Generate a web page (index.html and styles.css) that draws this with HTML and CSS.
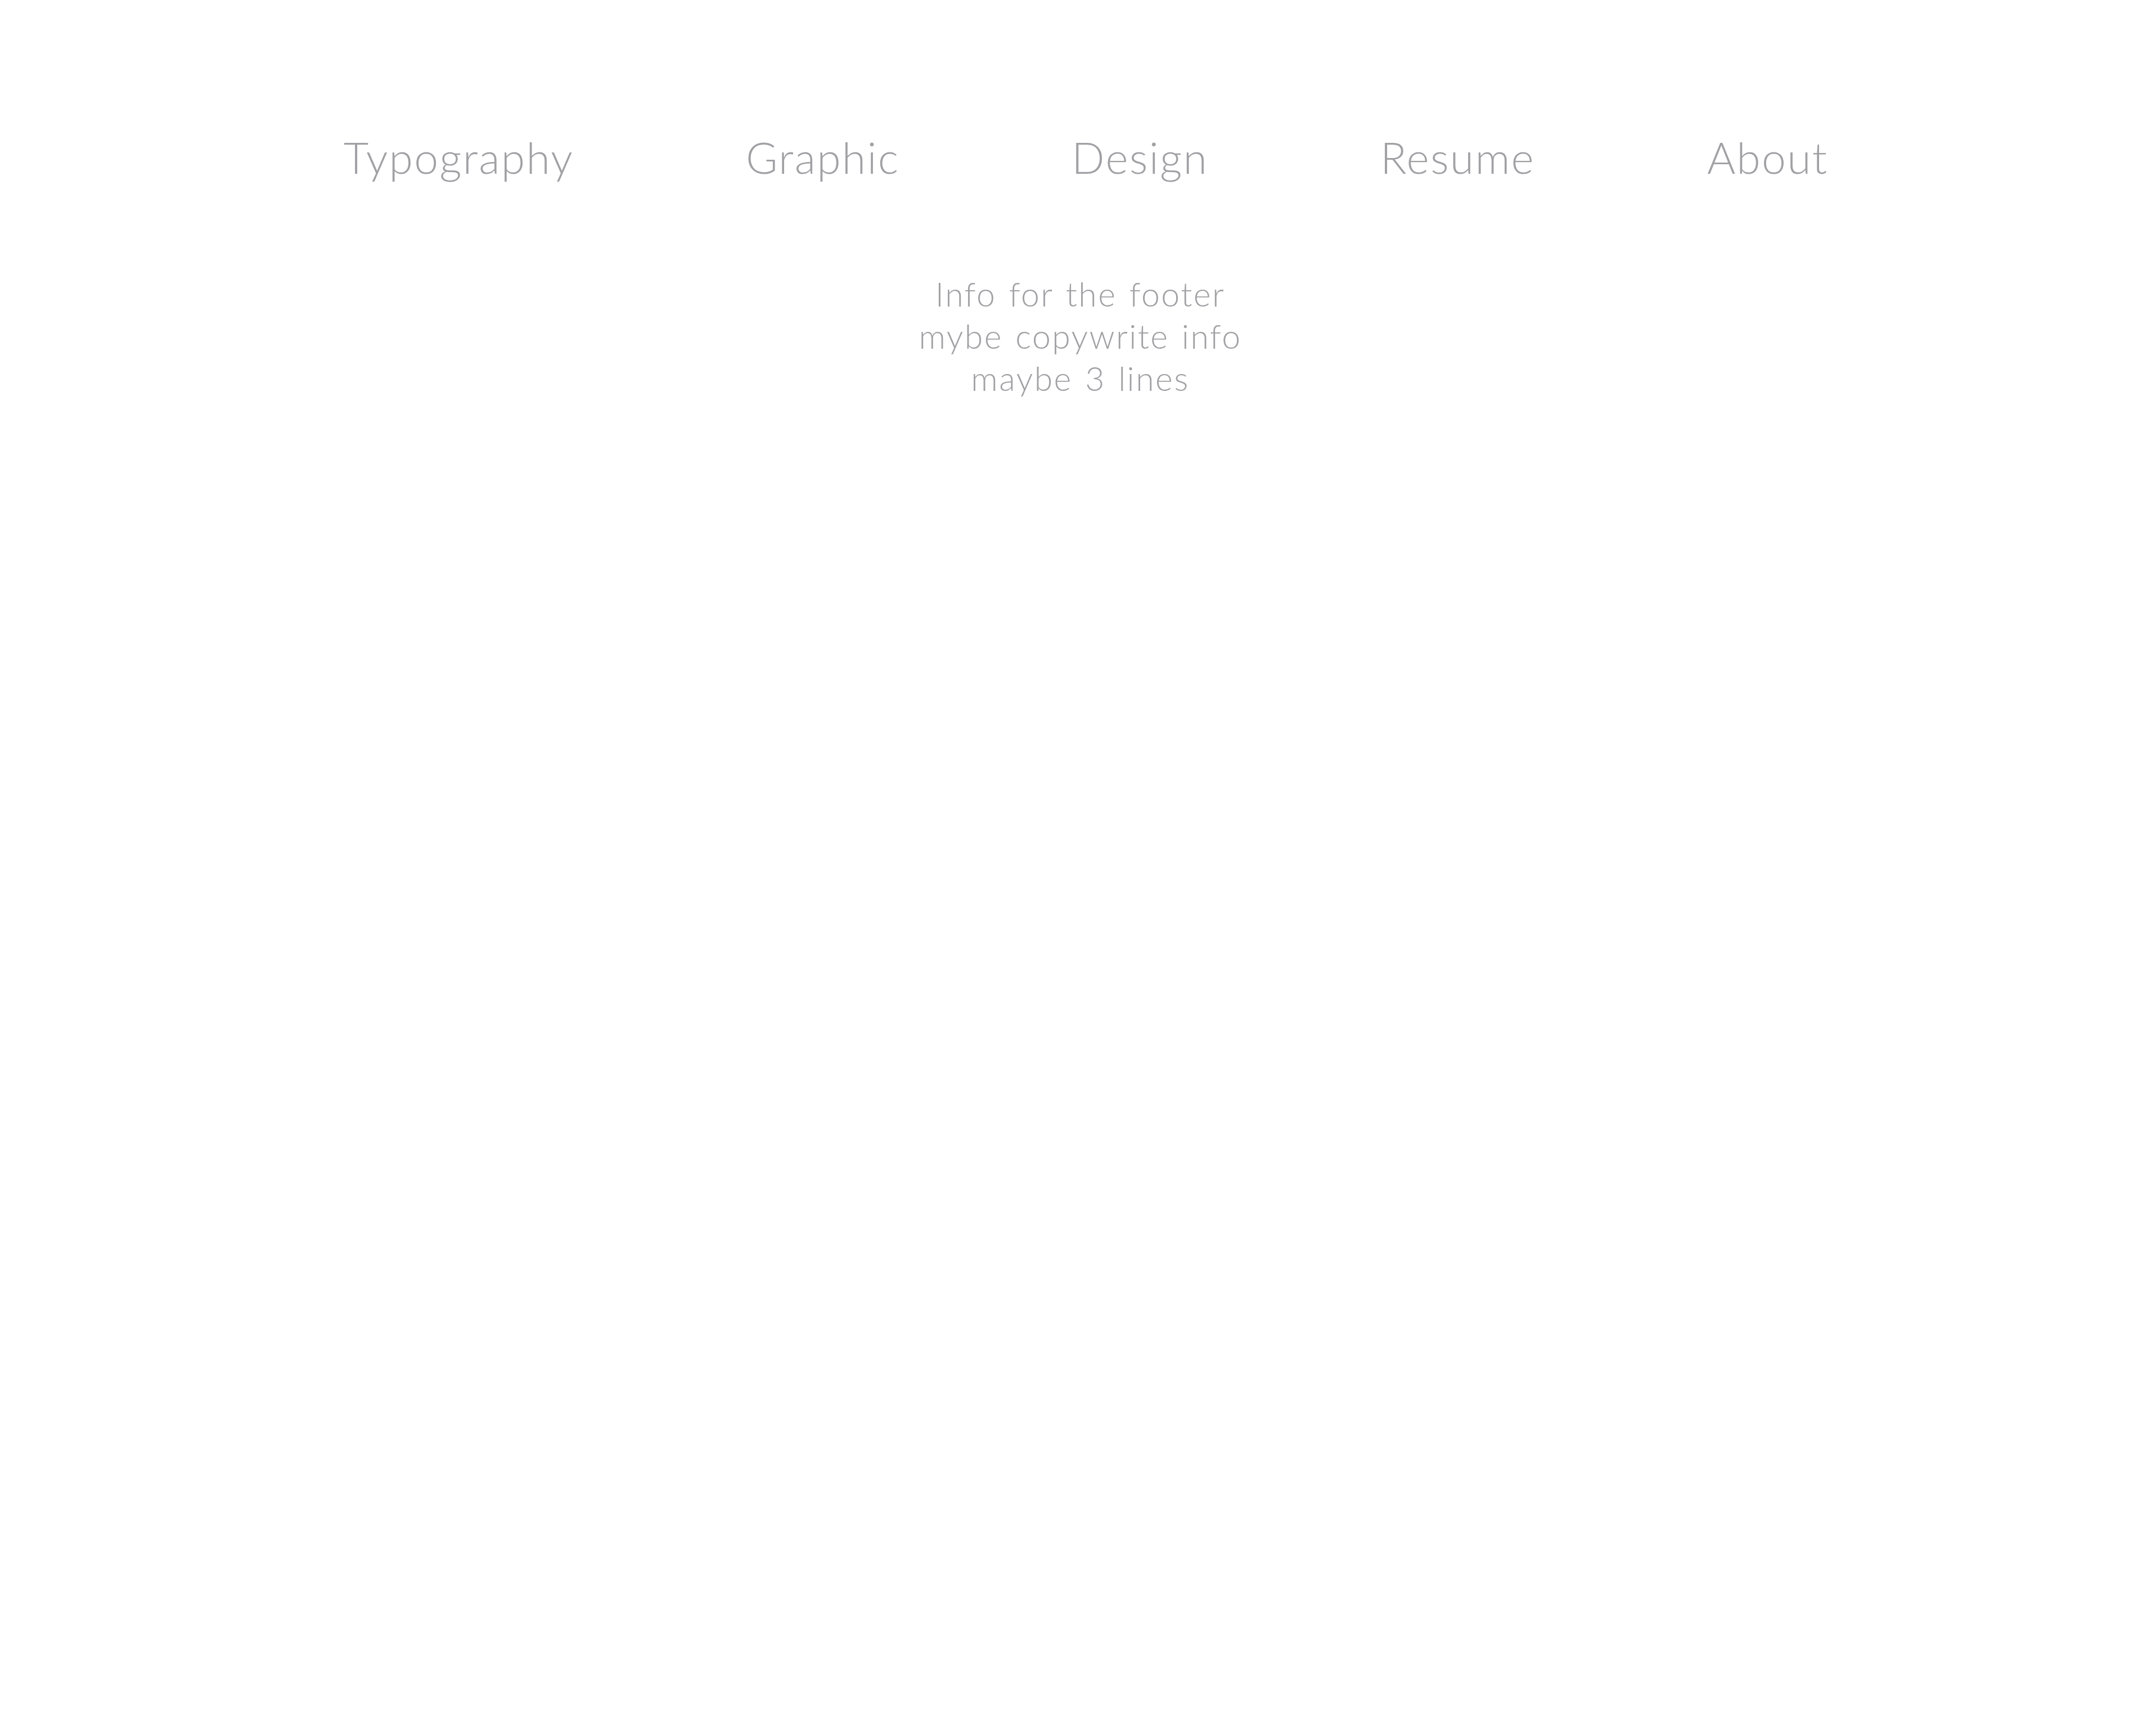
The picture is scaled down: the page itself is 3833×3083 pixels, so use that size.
FILE: index.html
```html
<!DOCTYPE html>
<html lang="en">
<head>
<meta charset="utf-8">
<title>Portfolio</title>
<link rel="stylesheet" href="styles.css">
</head>
<body>
  <header class="site-header">
    <nav class="main-nav">
      <a class="nav-link" href="#">Typography</a>
      <a class="nav-link" href="#">Graphic</a>
      <a class="nav-link" href="#">Design</a>
      <a class="nav-link" href="#">Resume</a>
      <a class="nav-link" href="#">About</a>
    </nav>
  </header>
  <footer class="site-footer">
    <p class="footer-info">Info for the footer<br>mybe copywrite info<br>maybe 3 lines</p>
  </footer>
</body>
</html>
```

FILE: styles.css
```css
html, body {
  margin: 0;
  padding: 0;
  background: #ffffff;
}

body {
  font-family: "Lato", "Noto Sans", "Liberation Sans", sans-serif;
  font-weight: 300;
  color: #a1a1a5;
  min-height: 3083px;
}

.site-header {
  padding-top: 233px;
}

.main-nav {
  display: flex;
  justify-content: center;
  gap: 306px;
  padding-left: 28px;
}

.nav-link {
  font-size: 77px;
  line-height: 92px;
  letter-spacing: 2.2px;
  color: #a1a1a5;
  text-decoration: none;
}

.site-footer {
  padding-top: 160px;
  padding-left: 8px;
  display: flex;
  justify-content: center;
}

.footer-info {
  margin: 0;
  font-size: 59px;
  line-height: 75px;
  letter-spacing: 2.4px;
  word-spacing: 4px;
  text-align: center;
}
```
